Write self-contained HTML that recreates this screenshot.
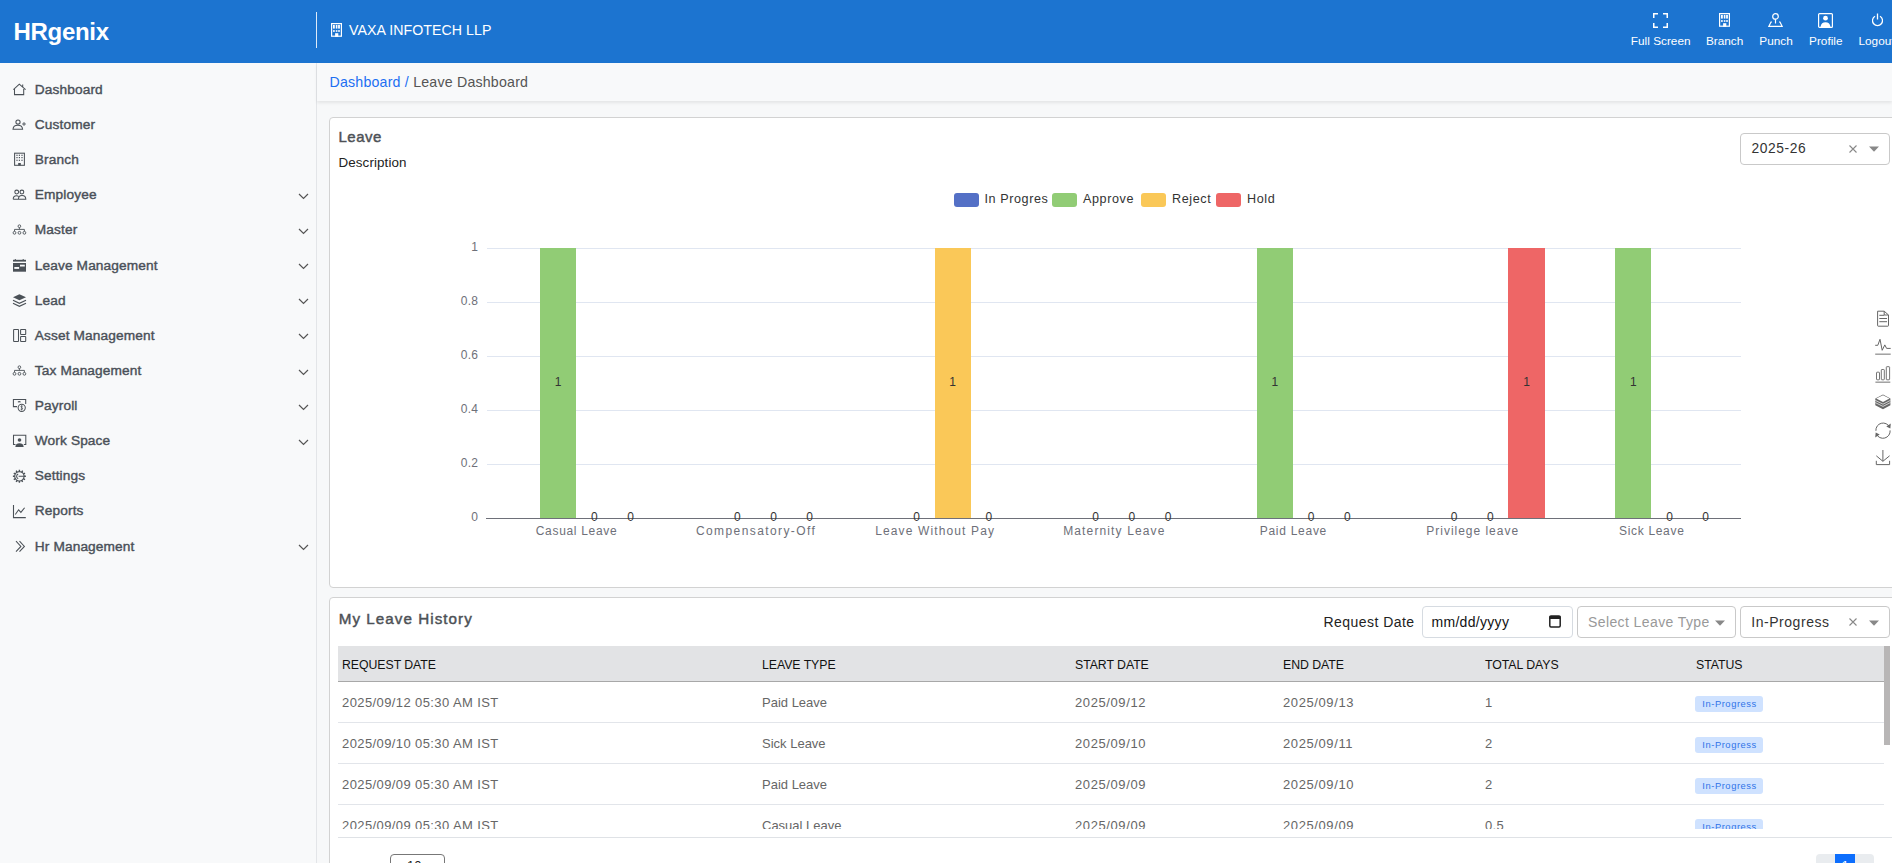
<!DOCTYPE html>
<html><head><meta charset="utf-8"><style>
html,body{margin:0;padding:0;}
body{width:1892px;height:863px;overflow:hidden;position:relative;background:#f5f7f9;font-family:"Liberation Sans",sans-serif;}
.t{position:absolute;white-space:nowrap;line-height:1;}
.r{position:absolute;}
</style></head><body>
<div class="r" style="left:0px;top:0px;width:1892px;height:63px;background:#1c74d0;"></div>
<div class="t" style="left:13.50px;top:19.98px;font-size:24px;color:#fff;font-weight:bold;letter-spacing:-0.3px;">HRgenix</div>
<div class="r" style="left:316px;top:12px;width:1px;height:36px;background:rgba(255,255,255,0.85);"></div>
<svg class="r" style="left:331px;top:23px;" width="11" height="14" viewBox="0 0 11 14"><rect x="0" y="0" width="11" height="13.8" fill="#fff"/><rect x="1.2" y="1.2" width="8.6" height="11.4" fill="#1c74d0"/><rect x="2" y="1.9" width="1.8" height="3.7" fill="#fff"/><rect x="4.8" y="1.9" width="1.6" height="3.7" fill="#fff"/><rect x="7.1" y="1.9" width="1.8" height="3.7" fill="#fff"/><rect x="2" y="7.2" width="1.8" height="1.6" fill="#fff"/><rect x="4.8" y="7.2" width="1.6" height="1.6" fill="#fff"/><rect x="7.1" y="7.2" width="1.8" height="1.6" fill="#fff"/><rect x="4.1" y="10.2" width="3.2" height="3.6" fill="#fff"/></svg>
<div class="t" style="left:349.00px;top:22.98px;font-size:14.2px;color:#fff;font-weight:normal;letter-spacing:0.05px;">VAXA INFOTECH LLP</div>
<div class="t" style="left:1360.70px;width:600px;text-align:center;top:36.21px;font-size:11.8px;color:#fff;font-weight:normal;">Full Screen</div>
<div class="t" style="left:1424.60px;width:600px;text-align:center;top:36.21px;font-size:11.8px;color:#fff;font-weight:normal;">Branch</div>
<div class="t" style="left:1476.00px;width:600px;text-align:center;top:36.21px;font-size:11.8px;color:#fff;font-weight:normal;">Punch</div>
<div class="t" style="left:1525.80px;width:600px;text-align:center;top:36.21px;font-size:11.8px;color:#fff;font-weight:normal;">Profile</div>
<div class="t" style="left:1576.50px;width:600px;text-align:center;top:36.21px;font-size:11.8px;color:#fff;font-weight:normal;">Logout</div>
<svg class="r" style="left:1653px;top:13px;" width="15" height="15" viewBox="0 0 15 15"><path d="M0.75 5V0.75H5 M10 0.75H14.25V5 M14.25 10V14.25H10 M5 14.25H0.75V10" fill="none" stroke="#fff" stroke-width="1.5"/></svg>
<svg class="r" style="left:1719px;top:13px;" width="11" height="14" viewBox="0 0 11 14"><rect x="0" y="0" width="11" height="13.8" fill="#fff"/><rect x="1.2" y="1.2" width="8.6" height="11.4" fill="#1c74d0"/><rect x="2" y="1.9" width="1.8" height="3.7" fill="#fff"/><rect x="4.8" y="1.9" width="1.6" height="3.7" fill="#fff"/><rect x="7.1" y="1.9" width="1.8" height="3.7" fill="#fff"/><rect x="2" y="7.2" width="1.8" height="1.6" fill="#fff"/><rect x="4.8" y="7.2" width="1.6" height="1.6" fill="#fff"/><rect x="7.1" y="7.2" width="1.8" height="1.6" fill="#fff"/><rect x="4.1" y="10.2" width="3.2" height="3.6" fill="#fff"/></svg>
<svg class="r" style="left:1768px;top:13px;" width="15" height="14" viewBox="0 0 15 14"><circle cx="7.5" cy="3.4" r="2.8" fill="none" stroke="#fff" stroke-width="1.2"/><path d="M7.5 6.2V10.5" stroke="#fff" stroke-width="1.2"/><path d="M4 9H3L0.8 13.4H14.2L12 9H11" fill="none" stroke="#fff" stroke-width="1.2"/></svg>
<svg class="r" style="left:1818px;top:13px;" width="15" height="15" viewBox="0 0 15 15"><rect x="0.6" y="0.6" width="13.8" height="13.8" rx="1" fill="none" stroke="#fff" stroke-width="1.2"/><circle cx="7.5" cy="5.2" r="2.4" fill="#fff"/><path d="M2.5 14C3 10.5 4.8 9.3 7.5 9.3C10.2 9.3 12 10.5 12.5 14Z" fill="#fff"/></svg>
<svg class="r" style="left:1872px;top:13px;" width="11" height="14" viewBox="0 0 11 14"><path d="M5.5 0.5V6.5" stroke="#fff" stroke-width="1.3"/><path d="M3 3.2A5 5 0 1 0 8 3.2" fill="none" stroke="#fff" stroke-width="1.3"/></svg>
<div class="r" style="left:0px;top:63px;width:316px;height:800px;background:#f8f9fa;"></div>
<div class="r" style="left:316px;top:63px;width:1px;height:800px;background:#e3e5e8;"></div>
<div class="t" style="left:34.80px;top:82.80px;font-size:13.7px;color:#4a5058;font-weight:normal;letter-spacing:0.12px;-webkit-text-stroke:0.4px #4a5058;">Dashboard</div>
<div class="t" style="left:34.80px;top:117.94px;font-size:13.7px;color:#4a5058;font-weight:normal;letter-spacing:0.12px;-webkit-text-stroke:0.4px #4a5058;">Customer</div>
<div class="t" style="left:34.80px;top:153.08px;font-size:13.7px;color:#4a5058;font-weight:normal;letter-spacing:0.12px;-webkit-text-stroke:0.4px #4a5058;">Branch</div>
<div class="t" style="left:34.80px;top:188.22px;font-size:13.7px;color:#4a5058;font-weight:normal;letter-spacing:0.12px;-webkit-text-stroke:0.4px #4a5058;">Employee</div>
<svg class="r" style="left:298px;top:192.82px;" width="11" height="7" viewBox="0 0 11 7"><path d="M1 1L5.5 5.5L10 1" fill="none" stroke="#555" stroke-width="1.2"/></svg>
<div class="t" style="left:34.80px;top:223.36px;font-size:13.7px;color:#4a5058;font-weight:normal;letter-spacing:0.12px;-webkit-text-stroke:0.4px #4a5058;">Master</div>
<svg class="r" style="left:298px;top:227.96px;" width="11" height="7" viewBox="0 0 11 7"><path d="M1 1L5.5 5.5L10 1" fill="none" stroke="#555" stroke-width="1.2"/></svg>
<div class="t" style="left:34.80px;top:258.50px;font-size:13.7px;color:#4a5058;font-weight:normal;letter-spacing:0.12px;-webkit-text-stroke:0.4px #4a5058;">Leave Management</div>
<svg class="r" style="left:298px;top:263.1px;" width="11" height="7" viewBox="0 0 11 7"><path d="M1 1L5.5 5.5L10 1" fill="none" stroke="#555" stroke-width="1.2"/></svg>
<div class="t" style="left:34.80px;top:293.64px;font-size:13.7px;color:#4a5058;font-weight:normal;letter-spacing:0.12px;-webkit-text-stroke:0.4px #4a5058;">Lead</div>
<svg class="r" style="left:298px;top:298.24px;" width="11" height="7" viewBox="0 0 11 7"><path d="M1 1L5.5 5.5L10 1" fill="none" stroke="#555" stroke-width="1.2"/></svg>
<div class="t" style="left:34.80px;top:328.78px;font-size:13.7px;color:#4a5058;font-weight:normal;letter-spacing:0.12px;-webkit-text-stroke:0.4px #4a5058;">Asset Management</div>
<svg class="r" style="left:298px;top:333.38px;" width="11" height="7" viewBox="0 0 11 7"><path d="M1 1L5.5 5.5L10 1" fill="none" stroke="#555" stroke-width="1.2"/></svg>
<div class="t" style="left:34.80px;top:363.92px;font-size:13.7px;color:#4a5058;font-weight:normal;letter-spacing:0.12px;-webkit-text-stroke:0.4px #4a5058;">Tax Management</div>
<svg class="r" style="left:298px;top:368.52px;" width="11" height="7" viewBox="0 0 11 7"><path d="M1 1L5.5 5.5L10 1" fill="none" stroke="#555" stroke-width="1.2"/></svg>
<div class="t" style="left:34.80px;top:399.06px;font-size:13.7px;color:#4a5058;font-weight:normal;letter-spacing:0.12px;-webkit-text-stroke:0.4px #4a5058;">Payroll</div>
<svg class="r" style="left:298px;top:403.65999999999997px;" width="11" height="7" viewBox="0 0 11 7"><path d="M1 1L5.5 5.5L10 1" fill="none" stroke="#555" stroke-width="1.2"/></svg>
<div class="t" style="left:34.80px;top:434.20px;font-size:13.7px;color:#4a5058;font-weight:normal;letter-spacing:0.12px;-webkit-text-stroke:0.4px #4a5058;">Work Space</div>
<svg class="r" style="left:298px;top:438.79999999999995px;" width="11" height="7" viewBox="0 0 11 7"><path d="M1 1L5.5 5.5L10 1" fill="none" stroke="#555" stroke-width="1.2"/></svg>
<div class="t" style="left:34.80px;top:469.34px;font-size:13.7px;color:#4a5058;font-weight:normal;letter-spacing:0.12px;-webkit-text-stroke:0.4px #4a5058;">Settings</div>
<div class="t" style="left:34.80px;top:504.48px;font-size:13.7px;color:#4a5058;font-weight:normal;letter-spacing:0.12px;-webkit-text-stroke:0.4px #4a5058;">Reports</div>
<div class="t" style="left:34.80px;top:539.62px;font-size:13.7px;color:#4a5058;font-weight:normal;letter-spacing:0.12px;-webkit-text-stroke:0.4px #4a5058;">Hr Management</div>
<svg class="r" style="left:298px;top:544.22px;" width="11" height="7" viewBox="0 0 11 7"><path d="M1 1L5.5 5.5L10 1" fill="none" stroke="#555" stroke-width="1.2"/></svg>
<svg class="r" style="left:10px;top:80px" width="20" height="20" viewBox="0 0 20 20"><path d="M3.4 9.6L9.3 4.2L15.6 9.6M4.5 9V14.6H13.7V9M12.7 4.6V7.2" fill="none" stroke="#4b5157" stroke-width="1.05"/></svg>
<svg class="r" style="left:10px;top:115px" width="20" height="20" viewBox="0 0 20 20"><circle cx="8" cy="7" r="2.1" fill="none" stroke="#4b5157" stroke-width="1.05"/><path d="M3 14.2C3.2 11.5 5.2 10.3 7.8 10.3C10.4 10.3 12.4 11.5 12.6 14.2Z" fill="none" stroke="#4b5157" stroke-width="1.05"/><path d="M12.1 9H15.9M14 7.1V10.9" fill="none" stroke="#4b5157" stroke-width="0.9"/></svg>
<svg class="r" style="left:10px;top:150px" width="20" height="20" viewBox="0 0 20 20"><rect x="4.6" y="3.2" width="9.8" height="12.1" fill="none" stroke="#4b5157" stroke-width="1.05"/><rect x="6.4" y="4.7" width="1.2" height="1.2" fill="#4b5157"/><rect x="6.4" y="7.0" width="1.2" height="1.2" fill="#4b5157"/><rect x="6.4" y="9.700000000000001" width="1.2" height="1.2" fill="#4b5157"/><rect x="8.8" y="4.7" width="1.2" height="1.2" fill="#4b5157"/><rect x="8.8" y="7.0" width="1.2" height="1.2" fill="#4b5157"/><rect x="8.8" y="9.700000000000001" width="1.2" height="1.2" fill="#4b5157"/><rect x="11.4" y="4.7" width="1.2" height="1.2" fill="#4b5157"/><rect x="11.4" y="7.0" width="1.2" height="1.2" fill="#4b5157"/><rect x="11.4" y="9.700000000000001" width="1.2" height="1.2" fill="#4b5157"/><rect x="8.2" y="13" width="2.6" height="2.4" fill="#4b5157"/></svg>
<svg class="r" style="left:10px;top:185px" width="20" height="20" viewBox="0 0 20 20"><circle cx="6.7" cy="7" r="1.9" fill="none" stroke="#4b5157" stroke-width="1.05"/><circle cx="11.9" cy="7" r="1.9" fill="none" stroke="#4b5157" stroke-width="1.05"/><path d="M3.2 14.3C3.2 11.8 4.5 10.7 6.5 10.7C7.5 10.7 8.2 11 8.6 11.5M3.2 14.3H8.4M8.4 14.3C8.4 11.6 9.7 10.4 12 10.4C14.5 10.4 15.8 11.6 15.8 14.3Z" fill="none" stroke="#4b5157" stroke-width="1.05"/></svg>
<svg class="r" style="left:10px;top:220px" width="20" height="20" viewBox="0 0 20 20"><g fill="none" stroke="#4b5157" stroke-width="0.9"><circle cx="9.4" cy="6.2" r="1.35"/><path d="M9.4 7.5V9.4M4.5 11.2V9.4H14.4V11.2"/><circle cx="4.5" cy="12.8" r="1.4"/><circle cx="9.45" cy="12.8" r="1.4"/><circle cx="14.4" cy="12.8" r="1.4"/></g></svg>
<svg class="r" style="left:10px;top:255px" width="20" height="20" viewBox="0 0 20 20"><path d="M3 4.8H16V6.6H3Z" fill="#4b5157"/><path d="M5.3 4V5M13.2 4V5" stroke="#4b5157" stroke-width="1"/><path d="M3 8H16V16.7H3Z" fill="#4b5157"/><rect x="10" y="9.7" width="4.8" height="1.8" fill="#f8f9fa"/><rect x="4.3" y="12" width="4.8" height="1.9" fill="#f8f9fa"/></svg>
<svg class="r" style="left:10px;top:290px" width="20" height="20" viewBox="0 0 20 20"><path d="M3 7.3L9.4 4.2L16 7.3L9.4 10.3Z" fill="#4b5157"/><path d="M3 10.2L9.4 13.2L16 10.2M3 13.2L9.4 16.2L16 13.2" fill="none" stroke="#4b5157" stroke-width="1.25"/></svg>
<svg class="r" style="left:10px;top:325px" width="20" height="20" viewBox="0 0 20 20"><rect x="3.6" y="4.4" width="4.9" height="12.1" rx="0.5" fill="none" stroke="#4b5157" stroke-width="1.05"/><rect x="10.6" y="4.4" width="5.1" height="5" rx="0.5" fill="none" stroke="#4b5157" stroke-width="1.05"/><rect x="10.6" y="11.5" width="5.1" height="5" rx="0.5" fill="none" stroke="#4b5157" stroke-width="1.05"/></svg>
<svg class="r" style="left:10px;top:361px" width="20" height="20" viewBox="0 0 20 20"><g fill="none" stroke="#4b5157" stroke-width="0.9"><circle cx="9.4" cy="6.2" r="1.35"/><path d="M9.4 7.5V9.4M4.5 11.2V9.4H14.4V11.2"/><circle cx="4.5" cy="12.8" r="1.4"/><circle cx="9.45" cy="12.8" r="1.4"/><circle cx="14.4" cy="12.8" r="1.4"/></g></svg>
<svg class="r" style="left:10px;top:396px" width="20" height="20" viewBox="0 0 20 20"><path d="M7 10.6H3.4V3.5H15.7V8" fill="none" stroke="#4b5157" stroke-width="1.05"/><path d="M8 6.3A1.5 1.5 0 0 1 10.5 6.3" fill="none" stroke="#4b5157" stroke-width="1.05"/><circle cx="11.7" cy="11.8" r="3.6" fill="none" stroke="#4b5157" stroke-width="1.05"/><path d="M12.6 10.3C12.2 9.9 11 9.8 10.9 10.7C10.8 11.6 12.7 11.4 12.6 12.7C12.5 13.7 11.1 13.6 10.6 13.2M11.7 9.2V14.5" fill="none" stroke="#4b5157" stroke-width="0.8"/></svg>
<svg class="r" style="left:10px;top:431px" width="20" height="20" viewBox="0 0 20 20"><path d="M5.5 13.5H3.5V4.3H15.8V13.5H13.8" fill="none" stroke="#4b5157" stroke-width="1.05"/><circle cx="9.5" cy="9" r="1.8" fill="#4b5157"/><path d="M5.3 15.9C5.6 13.3 7.2 12.2 9.5 12.2C11.8 12.2 13.4 13.3 13.7 15.9Z" fill="#4b5157"/></svg>
<svg class="r" style="left:10px;top:466px" width="20" height="20" viewBox="0 0 20 20"><circle cx="9.4" cy="10.3" r="4.7" fill="none" stroke="#4b5157" stroke-width="1.1"/><path d="M14.00 10.30L15.90 10.30M13.38 12.60L15.03 13.55M11.70 14.28L12.65 15.93M9.40 14.90L9.40 16.80M7.10 14.28L6.15 15.93M5.42 12.60L3.77 13.55M4.80 10.30L2.90 10.30M5.42 8.00L3.77 7.05M7.10 6.32L6.15 4.67M9.40 5.70L9.40 3.80M11.70 6.32L12.65 4.67M13.38 8.00L15.03 7.05" fill="none" stroke="#4b5157" stroke-width="1.4"/><path d="M8.2 7.9A2.6 2.6 0 0 0 8.2 12.7M8.6 10.3H14.2" fill="none" stroke="#4b5157" stroke-width="1.05"/></svg>
<svg class="r" style="left:10px;top:501px" width="20" height="20" viewBox="0 0 20 20"><path d="M3.5 4V16.6H15.8" fill="none" stroke="#4b5157" stroke-width="1.1"/><path d="M5.3 13.5L8.6 8.8L10.9 11.4L14.6 6.7" fill="none" stroke="#4b5157" stroke-width="1.05"/></svg>
<svg class="r" style="left:10px;top:536px" width="20" height="20" viewBox="0 0 20 20"><path d="M6 5.2L10.9 10.4L6 15.6M9.5 5.2L14.4 10.4L9.5 15.6" fill="none" stroke="#4b5157" stroke-width="1.05"/></svg>
<div class="r" style="left:317px;top:63px;width:1575px;height:800px;background:#f7f8f9;"></div>
<div class="r" style="left:317px;top:63px;width:1575px;height:38px;background:#f8f9fa;box-shadow:0 2px 3px rgba(0,0,0,0.08);"></div>
<div class="t" style="left:329.50px;top:74.98px;font-size:14.2px;color:#555;font-weight:normal;letter-spacing:0.2px;"><span style="color:#1d6ff2">Dashboard /</span> Leave Dashboard</div>
<div class="r" style="left:329px;top:117px;width:1600px;height:471px;background:#fff;border:1px solid #d2d2d2;border-radius:4px;box-sizing:border-box;"></div>
<div class="t" style="left:338.50px;top:128.80px;font-size:15px;color:#4d5156;font-weight:normal;letter-spacing:0.5px;-webkit-text-stroke:0.45px #4d5156;">Leave</div>
<div class="t" style="left:338.50px;top:155.66px;font-size:13.4px;color:#222;font-weight:normal;letter-spacing:0.1px;">Description</div>
<div class="r" style="left:1740px;top:133px;width:150px;height:32px;background:#fff;border:1px solid #c9c9c9;border-radius:4px;box-sizing:border-box;"></div>
<div class="t" style="left:1751.50px;top:142.02px;font-size:13.8px;color:#333;font-weight:normal;letter-spacing:0.6px;">2025-26</div>
<svg class="r" style="left:1848px;top:145px;" width="10" height="8" viewBox="0 0 10 8"><path d="M1.5 0.5L8.5 7.5M8.5 0.5L1.5 7.5" stroke="#888" stroke-width="1.1"/></svg>
<svg class="r" style="left:1869px;top:146px;" width="11" height="7" viewBox="0 0 11 7"><path d="M0 0.5H10L5 5.8Z" fill="#888"/></svg>
<div class="r" style="left:954px;top:193px;width:25px;height:14px;background:#5470c6;border-radius:3px;"></div>
<div class="t" style="left:984.40px;top:192.93px;font-size:12.6px;color:#333;font-weight:normal;letter-spacing:0.6px;">In Progres</div>
<div class="r" style="left:1052.3px;top:193px;width:25px;height:14px;background:#91cc75;border-radius:3px;"></div>
<div class="t" style="left:1083.00px;top:192.93px;font-size:12.6px;color:#333;font-weight:normal;letter-spacing:0.6px;">Approve</div>
<div class="r" style="left:1141px;top:193px;width:25px;height:14px;background:#fac858;border-radius:3px;"></div>
<div class="t" style="left:1172.00px;top:192.93px;font-size:12.6px;color:#333;font-weight:normal;letter-spacing:0.6px;">Reject</div>
<div class="r" style="left:1216px;top:193px;width:25px;height:14px;background:#ee6666;border-radius:3px;"></div>
<div class="t" style="left:1247.00px;top:192.93px;font-size:12.6px;color:#333;font-weight:normal;letter-spacing:0.6px;">Hold</div>
<div class="r" style="left:487px;top:248px;width:1254px;height:1px;background:#e0e6f1;"></div>
<div class="t" style="left:-121.70px;width:600px;text-align:right;top:241.14px;font-size:12px;color:#6e7079;font-weight:normal;letter-spacing:0.3px;">1</div>
<div class="r" style="left:487px;top:302px;width:1254px;height:1px;background:#e0e6f1;"></div>
<div class="t" style="left:-121.70px;width:600px;text-align:right;top:295.14px;font-size:12px;color:#6e7079;font-weight:normal;letter-spacing:0.3px;">0.8</div>
<div class="r" style="left:487px;top:356px;width:1254px;height:1px;background:#e0e6f1;"></div>
<div class="t" style="left:-121.70px;width:600px;text-align:right;top:349.14px;font-size:12px;color:#6e7079;font-weight:normal;letter-spacing:0.3px;">0.6</div>
<div class="r" style="left:487px;top:410px;width:1254px;height:1px;background:#e0e6f1;"></div>
<div class="t" style="left:-121.70px;width:600px;text-align:right;top:403.14px;font-size:12px;color:#6e7079;font-weight:normal;letter-spacing:0.3px;">0.4</div>
<div class="r" style="left:487px;top:464px;width:1254px;height:1px;background:#e0e6f1;"></div>
<div class="t" style="left:-121.70px;width:600px;text-align:right;top:457.14px;font-size:12px;color:#6e7079;font-weight:normal;letter-spacing:0.3px;">0.2</div>
<div class="t" style="left:-121.70px;width:600px;text-align:right;top:511.14px;font-size:12px;color:#6e7079;font-weight:normal;letter-spacing:0.3px;">0</div>
<div class="r" style="left:486px;top:518px;width:1255px;height:1px;background:#6e7079;"></div>
<div class="t" style="left:276.54px;width:600px;text-align:center;top:524.84px;font-size:12px;color:#6e7079;font-weight:normal;letter-spacing:0.68px;">Casual Leave</div>
<div class="r" style="left:540.0px;top:248px;width:36.2px;height:270px;background:#91cc75;"></div>
<div class="t" style="left:258.10px;width:600px;text-align:center;top:376.14px;font-size:12px;color:#333;font-weight:normal;">1</div>
<div class="t" style="left:294.30px;width:600px;text-align:center;top:510.84px;font-size:12px;color:#333;font-weight:normal;">0</div>
<div class="t" style="left:330.50px;width:600px;text-align:center;top:510.84px;font-size:12px;color:#333;font-weight:normal;">0</div>
<div class="t" style="left:456.10px;width:600px;text-align:center;top:524.84px;font-size:12px;color:#6e7079;font-weight:normal;letter-spacing:1.4px;">Compensatory-Off</div>
<div class="t" style="left:437.30px;width:600px;text-align:center;top:510.84px;font-size:12px;color:#333;font-weight:normal;">0</div>
<div class="t" style="left:473.50px;width:600px;text-align:center;top:510.84px;font-size:12px;color:#333;font-weight:normal;">0</div>
<div class="t" style="left:509.70px;width:600px;text-align:center;top:510.84px;font-size:12px;color:#333;font-weight:normal;">0</div>
<div class="t" style="left:635.17px;width:600px;text-align:center;top:524.84px;font-size:12px;color:#6e7079;font-weight:normal;letter-spacing:1.13px;">Leave Without Pay</div>
<div class="t" style="left:616.50px;width:600px;text-align:center;top:510.84px;font-size:12px;color:#333;font-weight:normal;">0</div>
<div class="r" style="left:934.6px;top:248px;width:36.2px;height:270px;background:#fac858;"></div>
<div class="t" style="left:652.70px;width:600px;text-align:center;top:376.14px;font-size:12px;color:#333;font-weight:normal;">1</div>
<div class="t" style="left:688.90px;width:600px;text-align:center;top:510.84px;font-size:12px;color:#333;font-weight:normal;">0</div>
<div class="t" style="left:814.37px;width:600px;text-align:center;top:524.84px;font-size:12px;color:#6e7079;font-weight:normal;letter-spacing:1.13px;">Maternity Leave</div>
<div class="t" style="left:795.70px;width:600px;text-align:center;top:510.84px;font-size:12px;color:#333;font-weight:normal;">0</div>
<div class="t" style="left:831.90px;width:600px;text-align:center;top:510.84px;font-size:12px;color:#333;font-weight:normal;">0</div>
<div class="t" style="left:868.10px;width:600px;text-align:center;top:510.84px;font-size:12px;color:#333;font-weight:normal;">0</div>
<div class="t" style="left:993.37px;width:600px;text-align:center;top:524.84px;font-size:12px;color:#6e7079;font-weight:normal;letter-spacing:0.73px;">Paid Leave</div>
<div class="r" style="left:1256.8px;top:248px;width:36.2px;height:270px;background:#91cc75;"></div>
<div class="t" style="left:974.90px;width:600px;text-align:center;top:376.14px;font-size:12px;color:#333;font-weight:normal;">1</div>
<div class="t" style="left:1011.10px;width:600px;text-align:center;top:510.84px;font-size:12px;color:#333;font-weight:normal;">0</div>
<div class="t" style="left:1047.30px;width:600px;text-align:center;top:510.84px;font-size:12px;color:#333;font-weight:normal;">0</div>
<div class="t" style="left:1172.69px;width:600px;text-align:center;top:524.84px;font-size:12px;color:#6e7079;font-weight:normal;letter-spacing:0.98px;">Privilege leave</div>
<div class="t" style="left:1154.10px;width:600px;text-align:center;top:510.84px;font-size:12px;color:#333;font-weight:normal;">0</div>
<div class="t" style="left:1190.30px;width:600px;text-align:center;top:510.84px;font-size:12px;color:#333;font-weight:normal;">0</div>
<div class="r" style="left:1508.4px;top:248px;width:36.2px;height:270px;background:#ee6666;"></div>
<div class="t" style="left:1226.50px;width:600px;text-align:center;top:376.14px;font-size:12px;color:#333;font-weight:normal;">1</div>
<div class="t" style="left:1351.74px;width:600px;text-align:center;top:524.84px;font-size:12px;color:#6e7079;font-weight:normal;letter-spacing:0.68px;">Sick Leave</div>
<div class="r" style="left:1615.2px;top:248px;width:36.2px;height:270px;background:#91cc75;"></div>
<div class="t" style="left:1333.30px;width:600px;text-align:center;top:376.14px;font-size:12px;color:#333;font-weight:normal;">1</div>
<div class="t" style="left:1369.50px;width:600px;text-align:center;top:510.84px;font-size:12px;color:#333;font-weight:normal;">0</div>
<div class="t" style="left:1405.70px;width:600px;text-align:center;top:510.84px;font-size:12px;color:#333;font-weight:normal;">0</div>
<svg class="r" style="left:1870px;top:300px" width="22" height="170" viewBox="1870 300 22 170"><g fill="none" stroke="#666" stroke-width="1" stroke-linejoin="round"><path d="M1877.6 311.2H1884.2L1888.5 315V325.6C1888.5 326 1888.2 326.2 1887.9 326.2H1878.2C1877.9 326.2 1877.6 326 1877.6 325.6Z"/><path d="M1884.2 311.2V315H1888.5"/><path d="M1879.3 315.3H1884.2M1879.3 318.5H1887M1879.3 321.7H1887"/><path d="M1875.2 345.3H1877.8L1880 339.3L1882.2 350.3L1884.8 344.9L1886.6 348.4H1890.7"/></g><path d="M1875.2 354.2H1890.7" stroke="#999" stroke-width="1.4"/><g fill="none" stroke="#666" stroke-width="0.9"><rect x="1876.5" y="372.2" width="3" height="7.6" rx="0.6"/><rect x="1881.3" y="369.5" width="3" height="10.3" rx="0.6"/><rect x="1886.3" y="366.7" width="3.3" height="13.1" rx="0.6"/></g><path d="M1875.4 382.2H1890.3" stroke="#999" stroke-width="1.4"/><path d="M1875.3 398.5L1883 394.6L1890.4 398.5V405.2L1883 409.3L1875.3 405.2Z" fill="#666"/><path d="M1876.2 398.5L1883 395.3L1889.5 398.5L1883 401.9Z" fill="#fff"/><path d="M1875.3 400.4L1883 404.2L1890.4 400.4M1875.3 402.6L1883 406.4L1890.4 402.6" fill="none" stroke="#fff" stroke-width="0.7"/><g fill="none" stroke="#666" stroke-width="1"><path d="M1875.9 430.8A7.2 7.2 0 0 1 1889.6 427.2"/><path d="M1890.1 430.4A7.2 7.2 0 0 1 1876.4 434.1"/></g><path d="M1890.8 423.6L1890.3 428.6L1886.3 426.6Z" fill="#666"/><path d="M1875.2 437.6L1875.7 432.6L1879.7 434.6Z" fill="#666"/><g fill="none" stroke="#666" stroke-width="1"><path d="M1882.9 450V461.2M1876.3 455.8L1882.9 461.3L1889.6 455.8"/><path d="M1876.3 460.8V464.6H1889.6V460.8"/></g></svg>
<div class="r" style="left:329px;top:597px;width:1600px;height:300px;background:#fff;border:1px solid #d2d2d2;border-radius:4px;box-sizing:border-box;"></div>
<div class="t" style="left:338.70px;top:611.43px;font-size:15.2px;color:#4d5156;font-weight:normal;letter-spacing:1.05px;-webkit-text-stroke:0.45px #4d5156;">My Leave History</div>
<div class="t" style="left:1323.50px;top:615.45px;font-size:14px;color:#222;font-weight:normal;letter-spacing:0.45px;">Request Date</div>
<div class="r" style="left:1422px;top:606px;width:151px;height:32px;background:#fff;border:1px solid #d6dbe1;border-radius:4px;box-sizing:border-box;"></div>
<div class="t" style="left:1431.50px;top:615.45px;font-size:14px;color:#111;font-weight:normal;letter-spacing:0.3px;">mm/dd/yyyy</div>
<svg class="r" style="left:1549px;top:614.3px;" width="12" height="14" viewBox="0 0 12 14"><rect x="0.8" y="2" width="10.4" height="11" rx="1.2" fill="none" stroke="#222" stroke-width="1.5"/><rect x="0.5" y="2" width="11" height="3" fill="#222"/></svg>
<div class="r" style="left:1577px;top:606px;width:159px;height:32px;background:#fff;border:1px solid #c9c9c9;border-radius:4px;box-sizing:border-box;"></div>
<div class="t" style="left:1588.00px;top:615.45px;font-size:14px;color:#999;font-weight:normal;letter-spacing:0.4px;">Select Leave Type</div>
<svg class="r" style="left:1714.5px;top:619.8px;" width="11" height="7" viewBox="0 0 11 7"><path d="M0 0.5H10L5 5.8Z" fill="#888"/></svg>
<div class="r" style="left:1740px;top:606px;width:150px;height:32px;background:#fff;border:1px solid #c9c9c9;border-radius:4px;box-sizing:border-box;"></div>
<div class="t" style="left:1751.20px;top:615.45px;font-size:14px;color:#333;font-weight:normal;letter-spacing:0.55px;">In-Progress</div>
<svg class="r" style="left:1848px;top:618px;" width="10" height="8" viewBox="0 0 10 8"><path d="M1.5 0.5L8.5 7.5M8.5 0.5L1.5 7.5" stroke="#888" stroke-width="1.1"/></svg>
<svg class="r" style="left:1868.5px;top:619.8px;" width="11" height="7" viewBox="0 0 11 7"><path d="M0 0.5H10L5 5.8Z" fill="#888"/></svg>
<div class="r" style="left:338px;top:646px;width:1546px;height:35px;background:#e2e3e5;"></div>
<div class="r" style="left:338px;top:681px;width:1546px;height:1px;background:#a8a8a8;"></div>
<div class="r" style="left:1884px;top:646px;width:6px;height:99px;background:#b8b6b6;"></div>
<div class="t" style="left:342.00px;top:658.59px;font-size:12.3px;color:#111;font-weight:normal;letter-spacing:-0.05px;">REQUEST DATE</div>
<div class="t" style="left:762.00px;top:658.59px;font-size:12.3px;color:#111;font-weight:normal;letter-spacing:-0.05px;">LEAVE TYPE</div>
<div class="t" style="left:1075.00px;top:658.59px;font-size:12.3px;color:#111;font-weight:normal;letter-spacing:-0.05px;">START DATE</div>
<div class="t" style="left:1283.00px;top:658.59px;font-size:12.3px;color:#111;font-weight:normal;letter-spacing:-0.05px;">END DATE</div>
<div class="t" style="left:1485.00px;top:658.59px;font-size:12.3px;color:#111;font-weight:normal;letter-spacing:-0.05px;">TOTAL DAYS</div>
<div class="t" style="left:1696.00px;top:658.59px;font-size:12.3px;color:#111;font-weight:normal;letter-spacing:-0.05px;">STATUS</div>
<div class="r" style="left:0;top:0;width:1892px;height:829px;overflow:hidden;clip-path:inset(682px 0 0 0);">
<div class="t" style="left:342.00px;top:696.40px;font-size:13px;color:#666;font-weight:normal;letter-spacing:0.4px;">2025/09/12 05:30 AM IST</div>
<div class="t" style="left:762.00px;top:696.40px;font-size:13px;color:#666;font-weight:normal;">Paid Leave</div>
<div class="t" style="left:1075.00px;top:696.40px;font-size:13px;color:#666;font-weight:normal;letter-spacing:0.6px;">2025/09/12</div>
<div class="t" style="left:1283.00px;top:696.40px;font-size:13px;color:#666;font-weight:normal;letter-spacing:0.6px;">2025/09/13</div>
<div class="t" style="left:1485.00px;top:696.40px;font-size:13px;color:#666;font-weight:normal;letter-spacing:0.3px;">1</div>
<div class="r" style="left:1695px;top:696px;width:68px;height:16px;background:#cfe2ff;border-radius:3px;"></div>
<div class="t" style="left:1702.30px;top:699.24px;font-size:9.4px;color:#2f74e8;font-weight:normal;letter-spacing:0.55px;">In-Progress</div>
<div class="r" style="left:338px;top:722px;width:1546px;height:1px;background:#e2e5ea;"></div>
<div class="t" style="left:342.00px;top:737.40px;font-size:13px;color:#666;font-weight:normal;letter-spacing:0.4px;">2025/09/10 05:30 AM IST</div>
<div class="t" style="left:762.00px;top:737.40px;font-size:13px;color:#666;font-weight:normal;">Sick Leave</div>
<div class="t" style="left:1075.00px;top:737.40px;font-size:13px;color:#666;font-weight:normal;letter-spacing:0.6px;">2025/09/10</div>
<div class="t" style="left:1283.00px;top:737.40px;font-size:13px;color:#666;font-weight:normal;letter-spacing:0.6px;">2025/09/11</div>
<div class="t" style="left:1485.00px;top:737.40px;font-size:13px;color:#666;font-weight:normal;letter-spacing:0.3px;">2</div>
<div class="r" style="left:1695px;top:737px;width:68px;height:16px;background:#cfe2ff;border-radius:3px;"></div>
<div class="t" style="left:1702.30px;top:740.24px;font-size:9.4px;color:#2f74e8;font-weight:normal;letter-spacing:0.55px;">In-Progress</div>
<div class="r" style="left:338px;top:763px;width:1546px;height:1px;background:#e2e5ea;"></div>
<div class="t" style="left:342.00px;top:778.40px;font-size:13px;color:#666;font-weight:normal;letter-spacing:0.4px;">2025/09/09 05:30 AM IST</div>
<div class="t" style="left:762.00px;top:778.40px;font-size:13px;color:#666;font-weight:normal;">Paid Leave</div>
<div class="t" style="left:1075.00px;top:778.40px;font-size:13px;color:#666;font-weight:normal;letter-spacing:0.6px;">2025/09/09</div>
<div class="t" style="left:1283.00px;top:778.40px;font-size:13px;color:#666;font-weight:normal;letter-spacing:0.6px;">2025/09/10</div>
<div class="t" style="left:1485.00px;top:778.40px;font-size:13px;color:#666;font-weight:normal;letter-spacing:0.3px;">2</div>
<div class="r" style="left:1695px;top:778px;width:68px;height:16px;background:#cfe2ff;border-radius:3px;"></div>
<div class="t" style="left:1702.30px;top:781.24px;font-size:9.4px;color:#2f74e8;font-weight:normal;letter-spacing:0.55px;">In-Progress</div>
<div class="r" style="left:338px;top:804px;width:1546px;height:1px;background:#e2e5ea;"></div>
<div class="t" style="left:342.00px;top:819.40px;font-size:13px;color:#666;font-weight:normal;letter-spacing:0.4px;">2025/09/09 05:30 AM IST</div>
<div class="t" style="left:762.00px;top:819.40px;font-size:13px;color:#666;font-weight:normal;">Casual Leave</div>
<div class="t" style="left:1075.00px;top:819.40px;font-size:13px;color:#666;font-weight:normal;letter-spacing:0.6px;">2025/09/09</div>
<div class="t" style="left:1283.00px;top:819.40px;font-size:13px;color:#666;font-weight:normal;letter-spacing:0.6px;">2025/09/09</div>
<div class="t" style="left:1485.00px;top:819.40px;font-size:13px;color:#666;font-weight:normal;letter-spacing:0.3px;">0.5</div>
<div class="r" style="left:1695px;top:819px;width:68px;height:16px;background:#cfe2ff;border-radius:3px;"></div>
<div class="t" style="left:1702.30px;top:822.24px;font-size:9.4px;color:#2f74e8;font-weight:normal;letter-spacing:0.55px;">In-Progress</div>
</div>
<div class="r" style="left:338px;top:837px;width:1554px;height:1px;background:#dfe2e6;"></div>
<div class="r" style="left:390px;top:854px;width:55px;height:20px;background:#fff;border:1px solid #777;border-radius:4px;box-sizing:border-box;"></div>
<div class="r" style="left:1816px;top:854px;width:58px;height:20px;background:#e9ecef;border-radius:4px;"></div>
<div class="r" style="left:1835px;top:854px;width:20px;height:20px;background:#0d6efd;"></div>
<div class="t" style="left:1841.50px;top:858.80px;font-size:13px;color:#fff;font-weight:normal;">1</div>
<div class="t" style="left:407.00px;top:859.00px;font-size:13px;color:#222;font-weight:normal;">10</div>
</body></html>
